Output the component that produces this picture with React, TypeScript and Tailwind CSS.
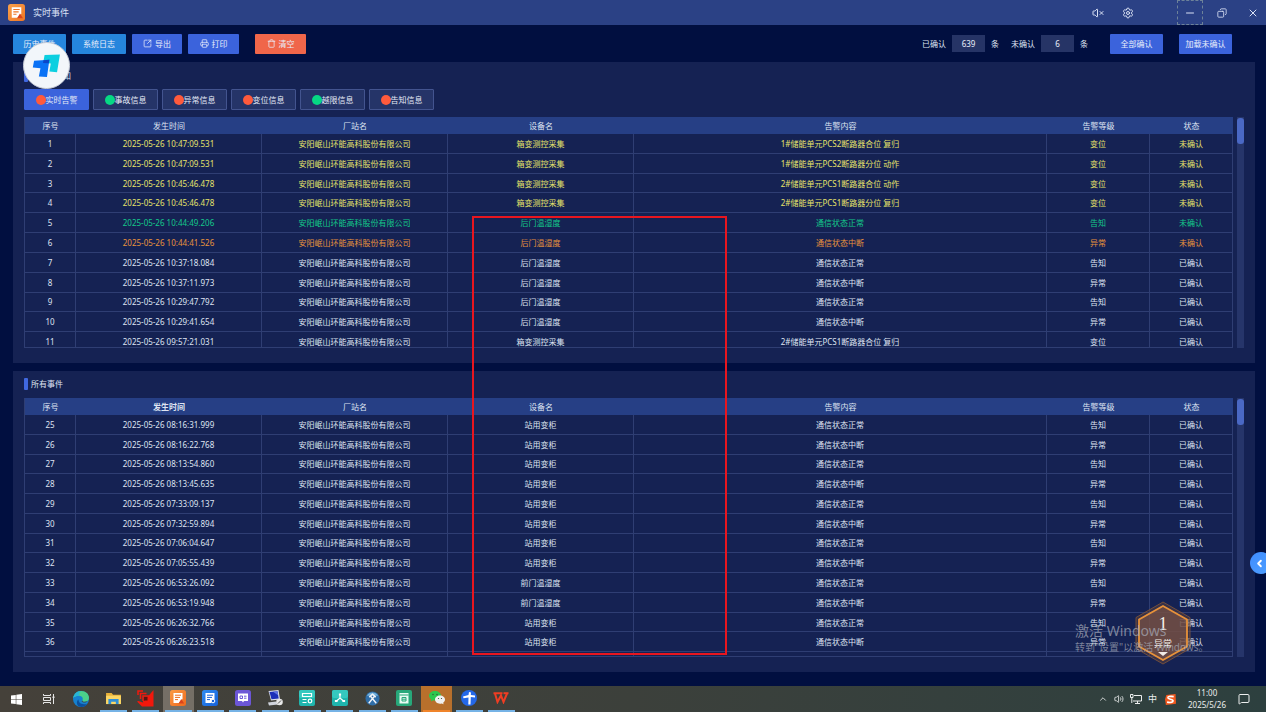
import { ReactNode } from "react";
import { ChevronLeft, ChevronUp, Copy, Minus, MessageSquare, Printer, Settings, SquareArrowOutUpRight, Trash, Volume2, VolumeX, X } from "lucide-react";

type EventRow = {
  id: number;
  time: string;
  device: string;
  content: string;
  level: string;
  status: string;
  color?: string;
};

const STATION = "安阳岷山环能高科股份有限公司";
const YELLOW = "text-[#e6e36a]";

const alarms: EventRow[] = [
  { id: 1, time: "2025-05-26 10:47:09.531", device: "箱变测控采集", content: "1#储能单元PCS2断路器合位 复归", level: "变位", status: "未确认", color: YELLOW },
  { id: 2, time: "2025-05-26 10:47:09.531", device: "箱变测控采集", content: "1#储能单元PCS2断路器分位 动作", level: "变位", status: "未确认", color: YELLOW },
  { id: 3, time: "2025-05-26 10:45:46.478", device: "箱变测控采集", content: "2#储能单元PCS1断路器合位 动作", level: "变位", status: "未确认", color: YELLOW },
  { id: 4, time: "2025-05-26 10:45:46.478", device: "箱变测控采集", content: "2#储能单元PCS1断路器分位 复归", level: "变位", status: "未确认", color: YELLOW },
  { id: 5, time: "2025-05-26 10:44:49.206", device: "后门温湿度", content: "通信状态正常", level: "告知", status: "未确认", color: "text-[#14c98a]" },
  { id: 6, time: "2025-05-26 10:44:41.526", device: "后门温湿度", content: "通信状态中断", level: "异常", status: "未确认", color: "text-[#e8933c]" },
  { id: 7, time: "2025-05-26 10:37:18.084", device: "后门温湿度", content: "通信状态正常", level: "告知", status: "已确认" },
  { id: 8, time: "2025-05-26 10:37:11.973", device: "后门温湿度", content: "通信状态中断", level: "异常", status: "已确认" },
  { id: 9, time: "2025-05-26 10:29:47.792", device: "后门温湿度", content: "通信状态正常", level: "告知", status: "已确认" },
  { id: 10, time: "2025-05-26 10:29:41.654", device: "后门温湿度", content: "通信状态中断", level: "异常", status: "已确认" },
  { id: 11, time: "2025-05-26 09:57:21.031", device: "箱变测控采集", content: "2#储能单元PCS1断路器合位 复归", level: "变位", status: "已确认" },
];

const events: EventRow[] = [
  { id: 25, time: "2025-05-26 08:16:31.999", device: "站用变柜", content: "通信状态正常", level: "告知", status: "已确认" },
  { id: 26, time: "2025-05-26 08:16:22.768", device: "站用变柜", content: "通信状态中断", level: "异常", status: "已确认" },
  { id: 27, time: "2025-05-26 08:13:54.860", device: "站用变柜", content: "通信状态正常", level: "告知", status: "已确认" },
  { id: 28, time: "2025-05-26 08:13:45.635", device: "站用变柜", content: "通信状态中断", level: "异常", status: "已确认" },
  { id: 29, time: "2025-05-26 07:33:09.137", device: "站用变柜", content: "通信状态正常", level: "告知", status: "已确认" },
  { id: 30, time: "2025-05-26 07:32:59.894", device: "站用变柜", content: "通信状态中断", level: "异常", status: "已确认" },
  { id: 31, time: "2025-05-26 07:06:04.647", device: "站用变柜", content: "通信状态正常", level: "告知", status: "已确认" },
  { id: 32, time: "2025-05-26 07:05:55.439", device: "站用变柜", content: "通信状态中断", level: "异常", status: "已确认" },
  { id: 33, time: "2025-05-26 06:53:26.092", device: "前门温湿度", content: "通信状态正常", level: "告知", status: "已确认" },
  { id: 34, time: "2025-05-26 06:53:19.948", device: "前门温湿度", content: "通信状态中断", level: "异常", status: "已确认" },
  { id: 35, time: "2025-05-26 06:26:32.766", device: "站用变柜", content: "通信状态正常", level: "告知", status: "已确认" },
  { id: 36, time: "2025-05-26 06:26:23.518", device: "站用变柜", content: "通信状态中断", level: "异常", status: "已确认" },
];

const tabs = [
  { label: "实时告警", dot: "bg-[#ff5a3c]", active: true },
  { label: "事故信息", dot: "bg-[#06d884]" },
  { label: "异常信息", dot: "bg-[#ff5a3c]" },
  { label: "变位信息", dot: "bg-[#ff5a3c]" },
  { label: "越限信息", dot: "bg-[#06d884]" },
  { label: "告知信息", dot: "bg-[#ff5a3c]" },
];

function ToolButton({ children, className }: { children: ReactNode; className: string }) {
  return (
    <button className={`flex h-5 items-center justify-center gap-[3px] rounded-[1px] text-[8px] whitespace-nowrap text-[#e9eefb] ${className}`}>
      {children}
    </button>
  );
}

function Counter({ label, value }: { label: string; value: number }) {
  return (
    <label className="flex items-center gap-[6px]">
      {label}
      <input readOnly value={value} className="h-[17px] w-[33px] bg-[#263466] text-center text-[8px] text-[#e9eefb]" />
      条
    </label>
  );
}

function PanelTitle({ children }: { children: ReactNode }) {
  return (
    <h2 className="flex h-3 items-center gap-[3px] text-[8px] text-[#dfe4f2]">
      <span className="h-3 w-1 rounded-[1px] bg-[#4068e0]" />
      {children}
    </h2>
  );
}

function EventTable({ rows, height, boldTime, partial }: { rows: EventRow[]; height: string; boldTime?: boolean; partial?: boolean }) {
  const cell = "border-r border-b border-[#2f3e73] p-0 pt-px";
  return (
    <table className={`w-full table-fixed border-separate border-spacing-0 border-l border-[#2f3e73] text-center text-[8px] leading-[10px] text-[#dfe4f2] ${height}`}>
      <colgroup>
        <col className="w-[51px]" />
        <col className="w-[186px]" />
        <col className="w-[186px]" />
        <col className="w-[186px]" />
        <col />
        <col className="w-[103px]" />
        <col className="w-[83px]" />
      </colgroup>
      <thead>
        <tr className="h-[17px] bg-[#263f85]">
          <th className="p-0 font-normal">序号</th>
          <th className={boldTime ? "p-0 font-bold" : "p-0 font-normal"}>发生时间</th>
          <th className="p-0 font-normal">厂站名</th>
          <th className="p-0 font-normal">设备名</th>
          <th className="p-0 font-normal">告警内容</th>
          <th className="p-0 font-normal">告警等级</th>
          <th className="p-0 font-normal">状态</th>
        </tr>
      </thead>
      <tbody>
        {rows.map((row) => (
          <tr key={row.id} className={row.color}>
            <td className={`${cell} text-[#dfe4f2]`}>{row.id}</td>
            <td className={cell}>{row.time}</td>
            <td className={cell}>{STATION}</td>
            <td className={cell}>{row.device}</td>
            <td className={cell}>{row.content}</td>
            <td className={cell}>{row.level}</td>
            <td className={cell}>{row.status}</td>
          </tr>
        ))}
        {partial && (
          <tr>
            {[0, 1, 2, 3, 4, 5, 6].map((i) => (
              <td key={i} className={cell}>&nbsp;</td>
            ))}
          </tr>
        )}
      </tbody>
    </table>
  );
}

function TableFrame({ children, className }: { children: ReactNode; className: string }) {
  return (
    <div className={`flex gap-1 overflow-hidden ${className}`}>
      <div className="min-w-0 flex-1 overflow-hidden border-b border-[#2f3e73]">{children}</div>
      <div className="w-[7px] bg-[#26356a]">
        <div className="mt-px h-[26px] rounded-[3px] bg-[#4a68c4]" />
      </div>
    </div>
  );
}

function DocIcon({ from, to, mark, className }: { from: string; to: string; mark?: string; className: string }) {
  const id = `doc${from.slice(1)}`;
  return (
    <svg viewBox="0 0 16 16" className={className}>
      <defs>
        <linearGradient id={id} x1="0" y1="0" x2="1" y2="1">
          <stop offset="0" stopColor={from} />
          <stop offset="1" stopColor={to} />
        </linearGradient>
      </defs>
      <rect width="16" height="16" rx="2.5" fill={`url(#${id})`} />
      <path d="M3.5 3h9v6l-3.500 4h-5.500z" fill="#fff" />
      <path d="M5 5.200h6M5 7.400h5M5 9.600h3" stroke={to} strokeWidth="1" />
      {mark ? <path d="M11.300 9l2.800 4.500H8.500z" fill={mark} /> : <circle cx="11" cy="11" r="1.800" fill={to} stroke="#fff" />}
    </svg>
  );
}

function TealIcon({ children }: { children: ReactNode }) {
  return (
    <svg viewBox="0 0 16 16" className="size-4">
      <rect width="16" height="16" rx="2" fill="#1fb5ad" />
      <rect width="16" height="8" rx="2" fill="#35c8bf" />
      <g fill="none" stroke="#fff" strokeWidth="1.2">{children}</g>
    </svg>
  );
}

const apps: { name: string; open?: boolean; bg?: string; icon: ReactNode }[] = [
  {
    name: "开始",
    icon: (
      <svg viewBox="0 0 12 12" className="size-[11px]" fill="#fff">
        <path d="M0 1.7l5.2-.7v4.7H0zM5.8.9L12 0v5.7H5.8zM0 6.3h5.2V11L0 10.3zM5.8 6.3H12V12l-6.2-.9z" />
      </svg>
    ),
  },
  {
    name: "任务视图",
    icon: (
      <svg viewBox="0 0 12 12" className="size-3" fill="none" stroke="#e6e6e6">
        <path d="M.5 1v1.500h7V1M.5 11V9.500h7V11M.5 4.500h7v3h-7zM10.500 1v10" />
        <path d="M10 3.500h1v1.500h-1z" fill="#e6e6e6" />
      </svg>
    ),
  },
  {
    name: "Edge",
    icon: (
      <svg viewBox="0 0 16 16" className="size-4">
        <circle cx="8" cy="8" r="8" fill="#1681cf" />
        <path d="M.3 7C1 2.800 4.200 0 8.200 0c4.600 0 7.800 3.200 7.800 6.800 0 2.500-1.900 4-4.200 4-1.700 0-2.600-.7-2.300-1.400.5-1 .7-4.400-3.500-4.600C3.400 4.700 1.200 5.700.3 7z" fill="#4bd08a" />
        <path d="M.3 7C1 2.800 4.200 0 8.200 0c-3 2-1 3-2.200 4.800C3.400 4.700 1.200 5.700.3 7z" fill="#28b4d8" />
        <path d="M5.500 8.500c0 3.500 3.500 5.800 8.800 4.200-2 3-5.300 3.800-8 2.900C3 14 3.500 9.500 5.500 8.500z" fill="#0c4f9c" />
        <path d="M9.500 9.400c-.3.700.6 1.400 2.300 1.400 1 0 2-.3 2.800-.8-.6 1.600-4.600 2.300-6 .3z" fill="#45413a" />
      </svg>
    ),
  },
  {
    name: "文件资源管理器",
    open: true,
    icon: (
      <svg viewBox="0 0 16 14" className="h-[13px] w-[15px]">
        <path d="M0 1h6l1.500 2H16v10H0z" fill="#e9b23a" />
        <path d="M0 4h16v9H0z" fill="#fbd766" />
        <path d="M2.500 13V7.500h11V13h-3v-2.500h-5V13z" fill="#2f8fd8" />
      </svg>
    ),
  },
  {
    name: "监控",
    open: true,
    icon: (
      <svg viewBox="0 0 17 17" className="size-[17px]">
        <path d="M16.500 0v16.500H5L0 11.500l1.500-.5L6 12.500z" fill="#f2180c" />
        <path d="M1 5V1h5M3.500 9V3.500h6M6 11V6h5.500v5.500H6" fill="none" stroke="#f2180c" strokeWidth="1.500" />
        <path d="M7 7h3.500v3.500H7z" fill="#5a1410" />
      </svg>
    ),
  },
  { name: "实时事件", open: true, bg: "bg-[#756f66]", icon: <DocIcon from="#fb9a45" to="#ee6a1e" mark="#d9431c" className="size-4" /> },
  { name: "历史事件", open: true, icon: <DocIcon from="#2f8cf2" to="#1560d8" className="size-4" /> },
  {
    name: "报文",
    open: true,
    icon: (
      <svg viewBox="0 0 16 16" className="size-4">
        <rect width="16" height="16" rx="2.500" fill="#6c56d6" />
        <path d="M3 3.500h10v7.500H9l-1 1.500L7 11H3z" fill="#fff" />
        <path d="M5 6h2.500v2.500H5zM9 6.200h2.500M9 8.200h2.500" stroke="#6c56d6" fill="none" />
      </svg>
    ),
  },
  {
    name: "远程",
    open: true,
    icon: (
      <svg viewBox="0 0 16 16" className="size-4">
        <path d="M1.500 1l10-1 1.500 9.500-9 1z" fill="#d8dce8" />
        <path d="M2.500 2l8-.8 1.200 7.300-7.200.8z" fill="#1c2fb8" />
        <path d="M6 1.700l4.500-.5.7 4z" fill="#5f74e0" />
        <path d="M1 12.500l8-1 2 3-9 1z" fill="#cfd3dc" />
        <circle cx="12.500" cy="12" r="3.300" fill="#e8e8e8" />
        <path d="M11 13.500l3-3" stroke="#555" />
      </svg>
    ),
  },
  { name: "配置", open: true, icon: <TealIcon><path d="M3.500 3.500h9v3h-9zM3.500 9.500h4M3.500 12.500h4" /><circle cx="11" cy="11" r="1.800" /></TealIcon> },
  { name: "拓扑", open: true, icon: <TealIcon><path d="M8 5v3M4.500 11L8 8l3.500 3" /><path d="M7.500 4h1v1h-1zM3.500 10.500h1.500v1h-1.500zM11 10.500h1.500v1h-1.500z" /></TealIcon> },
  {
    name: "工具",
    open: true,
    icon: (
      <svg viewBox="0 0 16 16" className="size-[15px]">
        <circle cx="8" cy="8" r="7.500" fill="#2f6ea8" />
        <path d="M2 5a7 7 0 0112 0z" fill="#76b2dc" />
        <path d="M4 13l6.500-8M12 13L5.500 5M4.500 6.500L8 3.500l3.500 3" stroke="#f2f4f8" strokeWidth="1.500" fill="none" />
      </svg>
    ),
  },
  {
    name: "曲线",
    open: true,
    icon: (
      <svg viewBox="0 0 16 16" className="size-4">
        <rect width="16" height="16" rx="2" fill="#27a87a" />
        <path d="M3.500 3h9v10.500h-9z" fill="#e8fbf3" />
        <path d="M3.500 5h9M6 7.500h4v3.500H6zM6 9.200h4" stroke="#27a87a" fill="none" />
      </svg>
    ),
  },
  {
    name: "微信",
    open: true,
    bg: "bg-[#b8702c]",
    icon: (
      <svg viewBox="0 0 16 14" className="h-[14px] w-4">
        <path d="M6 0c3.300 0 6 2.100 6 4.800S9.300 9.600 6 9.600c-.7 0-1.300-.1-1.900-.3L1.800 10.500l.5-2C.9 7.600 0 6.300 0 4.800 0 2.100 2.700 0 6 0z" fill="#2dc84d" />
        <path d="M11 4.500c2.800 0 5 1.800 5 4.100 0 1.200-.7 2.300-1.800 3.100l.4 1.600-1.900-.9c-.5.2-1.100.3-1.700.3-2.800 0-5-1.800-5-4.100s2.200-4.100 5-4.100z" fill="#f0f0f0" />
        <g fill="#35523a"><circle cx="4" cy="3.500" r=".7" /><circle cx="8" cy="3.500" r=".7" /><circle cx="9.500" cy="7.500" r=".6" /><circle cx="12.500" cy="7.500" r=".6" /></g>
      </svg>
    ),
  },
  {
    name: "ToDesk",
    open: true,
    icon: (
      <svg viewBox="0 0 16 16" className="size-4">
        <circle cx="8" cy="8" r="8" fill="#2468e8" />
        <path d="M2 6.500l5.500-1.500.5-3 2 .5-.2 2.500 4.200.5v2l-4.200-.5L9.500 14.500H7.300l.2-7L2.500 8.300z" fill="#fff" />
      </svg>
    ),
  },
  {
    name: "WPS",
    open: true,
    icon: (
      <svg viewBox="0 0 16 12" className="h-3 w-4" fill="none" stroke="#ef3d23" strokeWidth="2">
        <path d="M.5 1.200h9M2 1.500l2.500 8.500L8 3.500l2.500 6.500L14 1.500" />
        <path d="M10.500 1.200h5" />
      </svg>
    ),
  },
];

function Taskbar() {
  return (
    <footer className="flex h-[26px] items-stretch justify-between bg-gradient-to-r from-[#45413a] via-[#3c403b] to-[#2d403f] pl-px text-[#eceeee]">
      <nav className="flex w-[516px] justify-between">
        {apps.map((app) => (
          <button key={app.name} aria-label={app.name} className={`flex w-[31px] flex-col items-center ${app.bg ?? ""}`}>
            <span className="flex flex-1 items-center">{app.icon}</span>
            {app.open && <span className={`h-0.5 w-[27px] ${app.name === "微信" ? "bg-[#f0842a]" : "bg-[#76b3e6]"}`} />}
          </button>
        ))}
      </nav>
      <div className="flex items-center gap-[6px] pr-4 text-[9px]">
        <ChevronUp className="size-[10px]" />
        <Volume2 className="size-[10px]" strokeWidth={2} />
        <svg viewBox="0 0 12 10" className="h-[10px] w-3" fill="none" stroke="currentColor">
          <path d="M4 1.500h7.500v5.500H3M5 9.500h5M7.500 7v2.500M.5.5h2.500v3H.5zM1.800 3.500V9" />
        </svg>
        <span>中</span>
        <svg viewBox="0 0 12 12" className="mr-[6px] ml-0.5 size-[11px]">
          <path d="M1.500 1L11.500 0l.5 10.500L1 12l-1-6z" fill="#f2581e" />
          <path d="M9.500 2.800C5 2.200 3 2.800 3.200 4.300 3.500 6 9 5.500 8.800 7.700 8.700 9.500 5 9.400 2.300 8.900" fill="none" stroke="#fff" strokeWidth="1.800" />
        </svg>
        <div className="text-center text-[8px] leading-3">
          <div>11:00</div>
          <div>2025/5/26</div>
        </div>
        <MessageSquare className="ml-[6px] size-3" strokeWidth={2} />
      </div>
    </footer>
  );
}

export default function App() {
  return (
    <div className="relative flex min-h-screen flex-col overflow-hidden bg-[#010f40] font-['Noto_Sans','Noto_Sans_CJK_SC',sans-serif]">
      <header className="flex h-[25px] items-center justify-between bg-[#2b4185] pl-2 text-[#dbe2f5]">
        <div className="flex items-center gap-2">
          <DocIcon from="#f9a24c" to="#ef7524" mark="#d9431c" className="size-[17px]" />
          <h1 className="text-[9px]">实时事件</h1>
        </div>
        <div className="flex h-full items-center">
          <button aria-label="静音" className="mr-[18px]"><VolumeX className="size-3" strokeWidth={2} /></button>
          <button aria-label="设置" className="mr-[43px]"><Settings className="size-3" strokeWidth={2} /></button>
          <button aria-label="最小化" className="flex h-full w-[26px] items-center justify-center border border-dashed border-[#6d8299]"><Minus className="size-3" strokeWidth={2} /></button>
          <button aria-label="还原" className="flex w-[37px] justify-center"><Copy className="size-[10px] -scale-x-100" strokeWidth={2} /></button>
          <button aria-label="关闭" className="flex w-[26px] justify-center"><X className="size-3" strokeWidth={2} /></button>
        </div>
      </header>

      <div className="flex h-[37px] items-center justify-between pr-[34px] pl-[13px]">
        <div className="flex gap-[6px]">
          <ToolButton className="w-[53px] bg-[#2585dd]">历史事件</ToolButton>
          <ToolButton className="w-[54px] bg-[#2585dd]">系统日志</ToolButton>
          <ToolButton className="w-[50px] bg-[#3b63dc]"><SquareArrowOutUpRight className="size-[9px]" />导出</ToolButton>
          <ToolButton className="w-[51px] bg-[#3b63dc]"><Printer className="size-[9px]" />打印</ToolButton>
          <ToolButton className="ml-[10px] w-[51px] bg-[#f0664a]"><Trash className="size-[9px]" />清空</ToolButton>
        </div>
        <div className="flex items-center text-[8px] text-[#dfe4f2]">
          <Counter label="已确认" value={639} />
          <span className="w-3" />
          <Counter label="未确认" value={6} />
          <ToolButton className="mr-4 ml-[22px] w-[53px] bg-[#3b63dc]">全部确认</ToolButton>
          <ToolButton className="w-[53px] bg-[#3b63dc]">加载未确认</ToolButton>
        </div>
      </div>

      <main className="mr-[11px] ml-[13px] flex flex-1 flex-col gap-2">
        <section className="bg-[#152253] px-[11px] pt-2 pb-[15px]">
          <PanelTitle>未确认告知</PanelTitle>
          <div className="mt-[7px] mb-[7px] flex gap-1">
            {tabs.map((tab) => (
              <button
                key={tab.label}
                className={`flex h-[21px] w-[65px] items-center justify-center rounded-[1px] border text-[8px] text-[#e4e9f6] ${tab.active ? "border-[#3b63dc] bg-[#3b63dc]" : "border-[#43548f] bg-[#253468]"}`}
              >
                <span className={`size-[10px] rounded-full ${tab.dot}`} />
                {tab.label}
              </button>
            ))}
          </div>
          <TableFrame className="h-[231px]">
            <EventTable rows={alarms} height="h-[235px]" />
          </TableFrame>
        </section>

        <section className="bg-[#152253] px-[11px] pt-[7px] pb-[15px]">
          <PanelTitle>所有事件</PanelTitle>
          <TableFrame className="mt-2 h-[259px]">
            <EventTable rows={events} height="h-[274px]" boldTime partial />
          </TableFrame>
        </section>
      </main>

      <Taskbar />

      {/* highlighted device column */}
      <div className="pointer-events-none absolute top-[216px] left-[472px] h-[439px] w-[255px] border-2 border-[#e8161f]" />

      {/* remote desktop floating ball */}
      <button aria-label="ToDesk" className="absolute top-[42px] left-[23px] size-[47px] rounded-full border border-[#c9ced8] bg-[#f2f6fa]">
        <svg viewBox="0 0 47 47" className="size-full">
          <path d="M21.500 12.500L37.500 12l-3 18.500-8-.7 1.500-8.500-8-.5z" fill="#0ccfe0" />
          <path d="M10.500 18.500L26.500 17.500l-2.500 18-8.500-.5 1.700-8.500-8-1z" fill="#0a72f5" />
          <path d="M20.300 18l6.200-.5-.6 3.700-6-.2z" fill="#0b46c8" />
        </svg>
      </button>

      <button aria-label="展开" className="absolute top-[552px] right-[-6px] flex size-[22px] items-center rounded-full bg-gradient-to-br from-[#3f8cff] to-[#4fa0ff] pl-1 text-white">
        <ChevronLeft className="size-[11px]" strokeWidth={4} />
      </button>

      {/* alarm badge */}
      <div className="absolute top-[601px] right-[75px] h-16 w-14">
        <svg viewBox="0 0 56 64" className="absolute inset-0 size-full">
          <path d="M28 1L55 16.500v31L28 63 1 47.500v-31z" fill="#5c3f3c" fillOpacity=".5" stroke="#84573a" strokeOpacity=".8" />
          <path d="M28 5L52 18.500v27L28 59 4 45.500v-27z" fill="#7a5244" fillOpacity=".7" stroke="#e8923a" strokeWidth="1.800" />
          <path d="M23 51h10l-5 4z" fill="#f2ece6" />
        </svg>
        <div className="relative flex flex-col items-center pt-[13px] text-[#f4eee8]">
          <span className="font-['Liberation_Serif',serif] text-[18px] leading-5">1</span>
          <span className="pt-1 text-[9px] leading-3">异常</span>
        </div>
      </div>

      <div className="pointer-events-none absolute top-[622px] right-[60px] w-[131px] whitespace-nowrap text-[#a9adba]/70">
        <div className="text-[14px] leading-[18px]">激活 Windows</div>
        <div className="text-[10px] leading-[14px]">转到"设置"以激活 Windows。</div>
      </div>
    </div>
  );
}
